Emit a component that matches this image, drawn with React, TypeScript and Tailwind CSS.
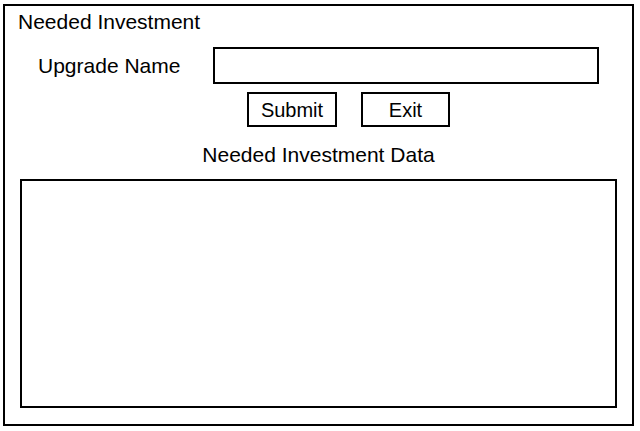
export default function App() {
  return (
    <div
      className="w-[640px] h-[431px] bg-white pl-[3px] pt-[4px] text-black"
      style={{ fontFamily: '"Liberation Sans", Arial, sans-serif' }}
    >
      <div className="w-[631px] h-[422px] border-2 border-black flex flex-col">
        {/* title */}
        <div className="ml-[13px] mt-[4px] text-[21px] leading-[24px]">Needed Investment</div>

        {/* upgrade name row */}
        <div className="mt-[13px] flex items-center h-[37px]">
          <label className="ml-[33px] w-[175px] text-[21px] leading-[24px]">Upgrade Name</label>
          <input className="w-[386px] h-[37px] border-2 border-black outline-none px-2 text-[20px]" />
        </div>

        {/* buttons */}
        <div className="mt-[8px] flex gap-[24px] pl-[242px]">
          <button className="w-[90px] h-[35px] border-2 border-black text-[20px] leading-none">Submit</button>
          <button className="w-[89px] h-[35px] border-2 border-black text-[20px] leading-none">Exit</button>
        </div>

        {/* data */}
        <div className="mt-[16px] text-center text-[21px] leading-[24px]">Needed Investment Data</div>
        <div className="mt-[12px] ml-[15px] w-[597px] h-[229px] border-2 border-black" />
      </div>
    </div>
  );
}
